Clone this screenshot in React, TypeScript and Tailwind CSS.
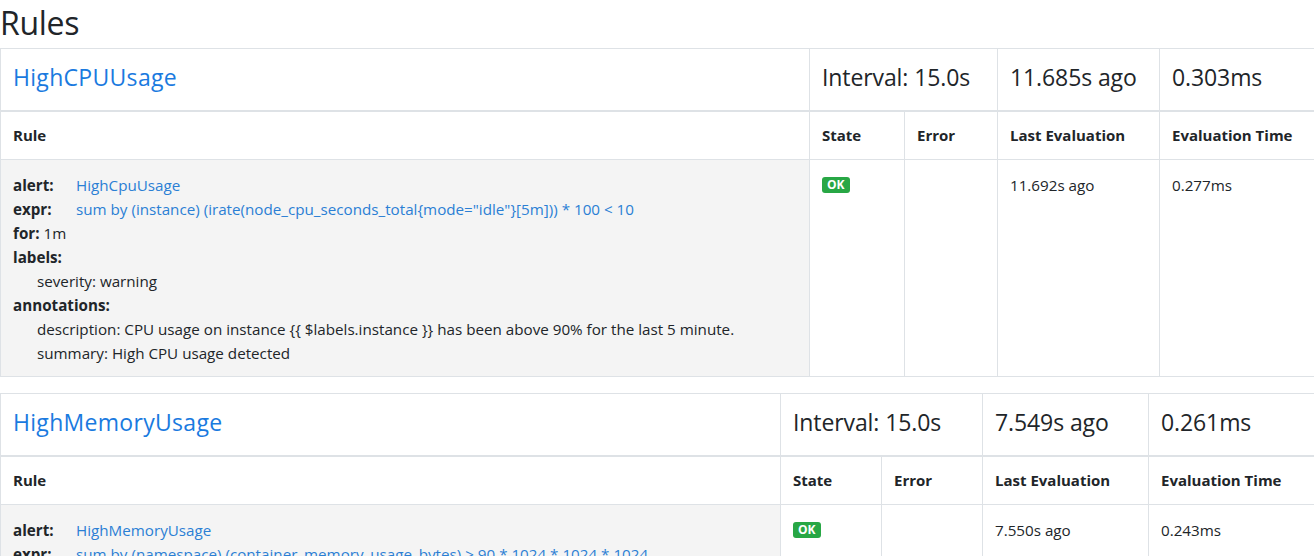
import React from "react";

type Rule = {
  alert: string;
  expr: string;
  forVal: string;
  labels: [string, string][];
  annotations: [string, string][];
  lastEval: string;
  evalTime: string;
};

type Group = {
  name: string;
  interval: string;
  lastEval: string;
  evalTime: string;
  widths: number[];
  rules: Rule[];
};

const groups: Group[] = [
  {
    name: "HighCPUUsage",
    interval: "Interval: 15.0s",
    lastEval: "11.685s ago",
    evalTime: "0.303ms",
    widths: [809, 95, 93, 162, 170],
    rules: [
      {
        alert: "HighCpuUsage",
        expr: 'sum by (instance) (irate(node_cpu_seconds_total{mode="idle"}[5m])) * 100 < 10',
        forVal: "1m",
        labels: [["severity", "warning"]],
        annotations: [
          ["description", "CPU usage on instance {{ $labels.instance }} has been above 90% for the last 5 minute."],
          ["summary", "High CPU usage detected"],
        ],
        lastEval: "11.692s ago",
        evalTime: "0.277ms",
      },
    ],
  },
  {
    name: "HighMemoryUsage",
    interval: "Interval: 15.0s",
    lastEval: "7.549s ago",
    evalTime: "0.261ms",
    widths: [780, 101, 101, 166, 180],
    rules: [
      {
        alert: "HighMemoryUsage",
        expr: "sum by (namespace) (container_memory_usage_bytes) > 90 * 1024 * 1024 * 1024",
        forVal: "1m",
        labels: [["severity", "warning"]],
        annotations: [
          ["description", "Memory usage in namespace {{ $labels.namespace }} has been above 90GB for the last 5 minute."],
          ["summary", "High memory usage detected"],
        ],
        lastEval: "7.550s ago",
        evalTime: "0.243ms",
      },
    ],
  },
];

const font = { fontFamily: '"Open Sans", "Noto Sans", sans-serif' };

function GroupTable({ g }: { g: Group }) {
  const total = g.widths.reduce((a, b) => a + b, 0);
  const headCell = "border border-b-2 border-[#dee2e6] px-3 pt-[10px] pb-[14px] align-middle";
  const headText = "text-[23px] leading-[29px] tracking-[-0.1px]";
  return (
    <table
      className="table-fixed border-collapse mb-4 text-[#212529]"
      style={{ width: total }}
    >
      <colgroup>
        {g.widths.map((w, i) => (
          <col key={i} style={{ width: w }} />
        ))}
      </colgroup>
      <thead>
        <tr className="h-[62px]">
          <td className={headCell}>
            <a className={`${headText} text-[#1a7adf] tracking-[0.3px]`}>{g.name}</a>
          </td>
          <td colSpan={2} className={headCell}>
            <span className={headText}>{g.interval}</span>
          </td>
          <td className={headCell}>
            <span className={headText}>{g.lastEval}</span>
          </td>
          <td className={headCell}>
            <span className={headText}>{g.evalTime}</span>
          </td>
        </tr>
        <tr className="h-[49px]">
          {["Rule", "State", "Error", "Last Evaluation", "Evaluation Time"].map((h) => (
            <th
              key={h}
              className="border border-[#dee2e6] px-3 text-left align-middle text-[15px] font-bold leading-6 whitespace-nowrap"
            >
              {h}
            </th>
          ))}
        </tr>
      </thead>
      <tbody>
        {g.rules.map((r) => (
          <tr key={r.alert}>
            <td className="border border-[#dee2e6] bg-[#f4f4f4] pl-3 pr-3 pt-[13px] pb-[11px] align-top text-[15.2px] leading-6">
              <div className="flex">
                <span className="w-[63px] font-bold">alert:</span>
                <a className="text-[#2b7fd4]">{r.alert}</a>
              </div>
              <div className="flex">
                <span className="w-[63px] font-bold">expr:</span>
                <a className="text-[#2b7fd4] whitespace-nowrap">{r.expr}</a>
              </div>
              <div>
                <span className="font-bold">for:</span> {r.forVal}
              </div>
              <div className="font-bold">labels:</div>
              {r.labels.map(([k, v]) => (
                <div key={k} className="pl-6">
                  {k}: {v}
                </div>
              ))}
              <div className="font-bold">annotations:</div>
              {r.annotations.map(([k, v]) => (
                <div key={k} className="pl-6 whitespace-nowrap">
                  {k}: {v}
                </div>
              ))}
            </td>
            <td className="border border-[#dee2e6] px-3 pt-[17px] align-top">
              <div className="flex">
                <span className="rounded-[3px] bg-[#28a745] px-[5px] text-[12px] font-bold leading-[16px] text-white">
                  OK
                </span>
              </div>
            </td>
            <td className="border border-[#dee2e6] p-3 align-top"></td>
            <td className="border border-[#dee2e6] px-3 pt-[13px] align-top text-[15.2px] leading-6 whitespace-nowrap">
              {r.lastEval}
            </td>
            <td className="border border-[#dee2e6] px-3 pt-[13px] align-top text-[15.2px] leading-6 whitespace-nowrap">
              {r.evalTime}
            </td>
          </tr>
        ))}
      </tbody>
    </table>
  );
}

export default function App() {
  return (
    <div className="w-[1314px] overflow-hidden bg-white" style={font}>
      <h2 className="text-[32px] leading-[40px] font-medium text-[#212529] pt-[3px] mb-[5px] tracking-[-0.3px]">Rules</h2>
      {groups.map((g) => (
        <GroupTable key={g.name} g={g} />
      ))}
    </div>
  );
}
